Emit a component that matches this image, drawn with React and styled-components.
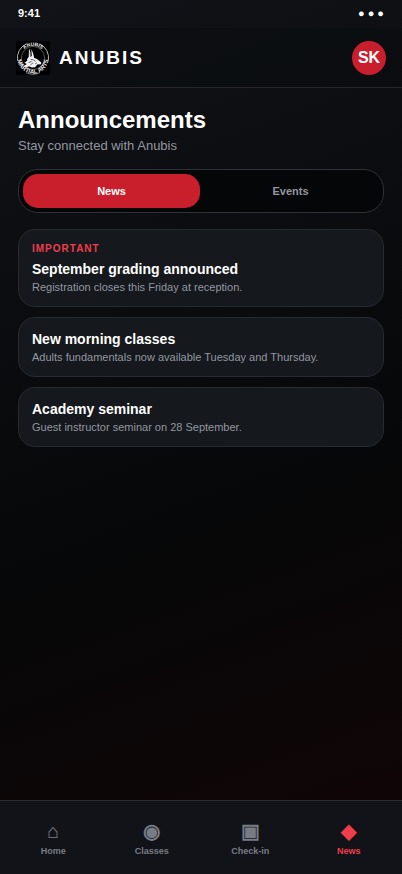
import React, { useState } from "react";
import styled, { createGlobalStyle } from "styled-components";

const GlobalStyle = createGlobalStyle`
  * {
    box-sizing: border-box;
  }
  body {
    margin: 0;
    background: #060708;
    color: #fff;
    font-family: "Liberation Sans", Arial, sans-serif;
  }
  button {
    font-family: inherit;
    border: 0;
    cursor: pointer;
  }
`;

const Screen = styled.div`
  display: flex;
  flex-direction: column;
  min-height: 100vh;
  background: linear-gradient(160deg, #111318 0%, #060708 58%, #120506 100%);
`;

const StatusBar = styled.div`
  display: flex;
  align-items: center;
  justify-content: space-between;
  height: 28px;
  padding: 0 18px 2px;
  font-size: 11px;
  font-weight: 700;
`;

const Header = styled.header`
  display: flex;
  align-items: center;
  justify-content: space-between;
  height: 60px;
  padding: 1px 16px 0;
  background: rgba(8, 9, 12, 0.3);
  border-bottom: 1px solid #25272c;
`;

const Brand = styled.div`
  display: flex;
  align-items: center;
  gap: 9px;
`;

const BrandName = styled.span`
  font-size: 19px;
  font-weight: 700;
  letter-spacing: 2px;
`;

const Logo = styled.svg`
  width: 34px;
  height: 34px;
  background: #000;
`;

const Avatar = styled.button`
  width: 34px;
  height: 34px;
  padding: 0;
  border-radius: 50%;
  background: #c91f2c;
  color: #fff;
  font-size: 16px;
  font-weight: 700;
`;

const Main = styled.main`
  flex: 1;
  padding: 18px;
`;

const Title = styled.h1`
  margin: 0;
  font-size: 24px;
  line-height: 28px;
`;

const Subtitle = styled.p`
  margin: 4px 0 16px;
  font-size: 13px;
  line-height: 15px;
  color: #9297a0;
`;

const Tabs = styled.div`
  display: grid;
  grid-template-columns: 1fr 1fr;
  gap: 2px;
  padding: 4px;
  margin-bottom: 16px;
  border: 1px solid #2e3136;
  border-radius: 20px;
  background: #050607;
`;

const Tab = styled.button`
  height: 34px;
  border-radius: 15px;
  background: ${(props) => (props.$active ? "#c91f2c" : "transparent")};
  color: ${(props) => (props.$active ? "#fff" : "#9297a0")};
  font-size: 11px;
  font-weight: 700;
`;

const CardList = styled.div`
  display: flex;
  flex-direction: column;
  gap: 10px;
`;

const Card = styled.article`
  padding: 13px;
  border: 1px solid #272a30;
  border-radius: 17px;
  background: #15181c;
`;

const CardLabel = styled.div`
  margin-bottom: 6px;
  font-size: 10px;
  line-height: 12px;
  font-weight: 700;
  letter-spacing: 1px;
  color: #f03d4c;
`;

const CardTitle = styled.h2`
  margin: 0 0 4px;
  font-size: 14px;
  line-height: 16px;
`;

const CardText = styled.p`
  margin: 0;
  font-size: 11px;
  line-height: 12px;
  color: #9297a0;
`;

const BottomNav = styled.nav`
  display: grid;
  grid-template-columns: repeat(4, 1fr);
  height: 74px;
  padding: 0 4px;
  border-top: 1px solid #2b2d33;
  background: #121318;
`;

const NavItem = styled.button`
  display: flex;
  flex-direction: column;
  align-items: center;
  justify-content: center;
  gap: 4px;
  padding: 0;
  background: none;
  color: ${(props) => (props.$active ? "#f03d4c" : "#777c85")};
  font-size: 9px;
  line-height: 10px;
  font-weight: 700;
`;

const NavIcon = styled.span`
  font-size: 20px;
  line-height: 22px;
`;

const news = [
  {
    label: "IMPORTANT",
    title: "September grading announced",
    text: "Registration closes this Friday at reception.",
  },
  {
    title: "New morning classes",
    text: "Adults fundamentals now available Tuesday and Thursday.",
  },
  {
    title: "Academy seminar",
    text: "Guest instructor seminar on 28 September.",
  },
];

const navItems = [
  { icon: "⌂", name: "Home" },
  { icon: "◉", name: "Classes" },
  { icon: "▣", name: "Check-in" },
  { icon: "◆", name: "News" },
];

const AnubisLogo = () => (
  <Logo viewBox="0 0 34 34" aria-hidden="true">
    <defs>
      <path id="arcTop" d="M4.8 17a12.2 12.2 0 0 1 24.4 0" />
      <path id="arcBottom" d="M1.4 17a15.6 15.6 0 0 0 31.2 0" />
    </defs>
    <g fill="none" stroke="#c8c8c8">
      <path d="M1.6 19.5A15.6 15.6 0 0 1 10.4 2.8" strokeWidth="0.9" />
      <path d="M23.6 2.8a15.6 15.6 0 0 1 8.8 16.7" strokeWidth="0.9" />
      <path d="M10 31.6a15.6 15.6 0 0 0 14 0" strokeWidth="0.6" />
      <circle cx="17" cy="17" r="11.6" strokeWidth="0.6" stroke="#8a8a8a" />
    </g>
    <g fill="#ececec" fontWeight="700" textAnchor="middle">
      <text fontSize="5">
        <textPath href="#arcTop" startOffset="50%">ANUBIS</textPath>
      </text>
      <text fontSize="6">
        <textPath href="#arcBottom" startOffset="50%">MARTIAL ARTS</textPath>
      </text>
    </g>
    {/* jackal head, ears up and muzzle to the right */}
    <path
      fill="#f2f2f2"
      d="M13 7.4l1.6 4.4.5 3.8.7-.6-.5-7 1.9 4.4.9 4.4 3.2 1.4 4 3.3-.3 1.7-3.8.3-2 2.8-3.4.3-2.8-1.3-2.8 1.2-1.9-1.7 2.5-1.8-2.4-1.3 2.9-2-.2-1.7 1.6-2z"
    />
    <path
      fill="none"
      stroke="#000"
      strokeWidth="0.6"
      d="M14.6 18.4l2.8.5 2.2 1.4M12.6 21.6l3-1.2M14.4 23.8l2.8-2M19 23l1.8-1.2M14 11.4l.6 4.4"
    />
  </Logo>
);

const App = () => {
  const [tab, setTab] = useState("News");
  const [page, setPage] = useState("News");

  return (
    <>
      <GlobalStyle />
      <Screen>
        <StatusBar>
          <span>9:41</span>
          <span>● ● ●</span>
        </StatusBar>
        <Header>
          <Brand>
            <AnubisLogo />
            <BrandName>ANUBIS</BrandName>
          </Brand>
          <Avatar type="button">SK</Avatar>
        </Header>
        <Main>
          <Title>Announcements</Title>
          <Subtitle>Stay connected with Anubis</Subtitle>
          <Tabs>
            {["News", "Events"].map((name) => (
              <Tab key={name} type="button" $active={tab === name} onClick={() => setTab(name)}>
                {name}
              </Tab>
            ))}
          </Tabs>
          <CardList>
            {news.map((item) => (
              <Card key={item.title}>
                {item.label && <CardLabel>{item.label}</CardLabel>}
                <CardTitle>{item.title}</CardTitle>
                <CardText>{item.text}</CardText>
              </Card>
            ))}
          </CardList>
        </Main>
        <BottomNav>
          {navItems.map(({ icon, name }) => (
            <NavItem key={name} type="button" $active={page === name} onClick={() => setPage(name)}>
              <NavIcon aria-hidden="true">{icon}</NavIcon>
              {name}
            </NavItem>
          ))}
        </BottomNav>
      </Screen>
    </>
  );
};

export default App;
